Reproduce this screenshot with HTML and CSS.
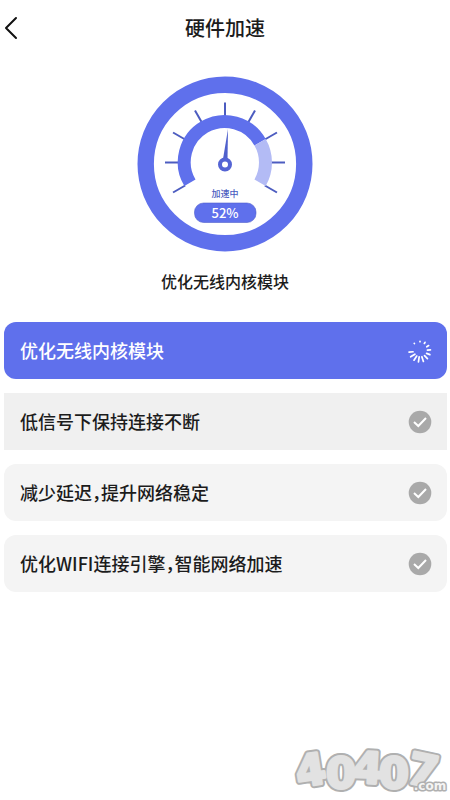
FILE: index.html
```html
<!DOCTYPE html>
<html lang="zh-CN">
<head>
<meta charset="utf-8">
<meta name="viewport" content="width=device-width, initial-scale=1">
<title>硬件加速</title>
<link rel="stylesheet" href="styles.css">
</head>
<body>
<header class="topbar">
  <button class="back" type="button" aria-label="返回">
    <svg width="16" height="24" viewBox="0 0 16 24"><path d="M12 2 2 12 12 22" fill="none" stroke="currentColor" stroke-width="2" stroke-linecap="round" stroke-linejoin="round"/></svg>
  </button>
  <h1 class="title">硬件加速</h1>
</header>
<main class="content">
  <section class="status">
    <svg class="gauge" width="176" height="176" viewBox="0 0 176 176">
      <circle cx="88" cy="88" r="79.3" fill="none" stroke="#5f70ec" stroke-width="16.4"/>
      <g transform="translate(88 86.5)">
        <g stroke="#4c5cc0" stroke-width="2">
          <path id="tick" d="M46 0H60"/>
          <use href="#tick" transform="rotate(30)"/>
          <use href="#tick" transform="rotate(-30)"/>
          <use href="#tick" transform="rotate(-60)"/>
          <use href="#tick" transform="rotate(-90)"/>
          <use href="#tick" transform="rotate(-120)"/>
          <use href="#tick" transform="rotate(-150)"/>
          <use href="#tick" transform="rotate(180)"/>
          <use href="#tick" transform="rotate(150)"/>
        </g>
        <path d="M-35.07 20.25A40.5 40.5 0 1 1 35.07-20.25" fill="none" stroke="#5f70ec" stroke-width="13"/>
        <path d="M35.07-20.25A40.5 40.5 0 0 1 35.07 20.25" fill="none" stroke="#b3bbf5" stroke-width="13"/>
      </g>
      <path d="M91 53 86 83H90.5Z" fill="#4f60cc"/>
      <circle cx="88" cy="88.5" r="5" fill="#fff" stroke="#5464d4" stroke-width="4"/>
      <text class="gauge-label" x="88" y="121">加速中</text>
      <rect x="57.5" y="127" width="61.5" height="19.5" rx="9" fill="#5f70ec" stroke="#5060cc" stroke-width=".6"/>
      <text class="gauge-value" x="88" y="141.5">52%</text>
    </svg>
    <p class="caption">优化无线内核模块</p>
  </section>
  <ul class="tasks">
    <li class="task task-active">
      <span>优化无线内核模块</span>
      <svg class="state" width="24" height="24" viewBox="-12 -12 24 24" stroke="#fff" stroke-width="1.7" stroke-linecap="round">
        <path d="M0-9.3V-9.7"/><path d="M0-8.7V-10" transform="rotate(30)"/><path d="M0-8V-10.2" transform="rotate(58)"/>
        <path d="M0-7.5V-10.5" transform="rotate(84)"/><path d="M0-7V-10.5" transform="rotate(110)"/><path d="M0-6.5V-10.7" transform="rotate(136)"/>
        <path d="M0-6V-11" transform="rotate(162)"/><path d="M0-6V-11" transform="rotate(188)"/><path d="M0-6V-11" transform="rotate(213)"/>
        <path d="M0-6V-11" transform="rotate(238)"/><path d="M0-7V-11" transform="rotate(264)"/><path d="M0-9.3V-9.6" transform="rotate(323)"/>
      </svg>
    </li>
    <li class="task task-pressed">
      <span>低信号下保持连接不断</span>
      <svg class="state" width="24" height="24" viewBox="0 0 24 24"><circle cx="12" cy="12" r="11.3" fill="#a9a9a9"/><path d="M6 12 10.3 16 18 8" fill="none" stroke="#fff" stroke-width="2"/></svg>
    </li>
    <li class="task">
      <span>减少延迟，提升网络稳定</span>
      <svg class="state" width="24" height="24" viewBox="0 0 24 24"><circle cx="12" cy="12" r="11.3" fill="#a9a9a9"/><path d="M6 12 10.3 16 18 8" fill="none" stroke="#fff" stroke-width="2"/></svg>
    </li>
    <li class="task">
      <span>优化WIFI连接引擎，智能网络加速</span>
      <svg class="state" width="24" height="24" viewBox="0 0 24 24"><circle cx="12" cy="12" r="11.3" fill="#a9a9a9"/><path d="M6 12 10.3 16 18 8" fill="none" stroke="#fff" stroke-width="2"/></svg>
    </li>
  </ul>
</main>
<footer class="footer">
  <svg class="brand" width="160" height="60" viewBox="0 0 160 60">
    <g class="brand-digits">
      <g class="brand-edge">
        <g id="digits">
          <text transform="translate(23 45) rotate(-9)">4</text>
          <text transform="translate(77 43) rotate(3)">4</text>
          <text transform="translate(51 48)">0</text>
          <text transform="translate(104 48)">0</text>
          <text transform="translate(130 45) rotate(12)">7</text>
        </g>
      </g>
      <use class="brand-face" href="#digits"/>
    </g>
    <text class="brand-suffix" x="140" y="50">.com</text>
  </svg>
</footer>
</body>
</html>
```
FILE: styles.css
```css
* {
  box-sizing: border-box;
}

body {
  margin: 0;
  min-height: 100vh;
  display: flex;
  flex-direction: column;
  background: #fff;
  color: #1c1c1c;
  font-family: "Noto Sans CJK SC", sans-serif;
  font-weight: 500;
}

.topbar {
  display: grid;
  grid-template-columns: 40px 1fr 40px;
  align-items: center;
  height: 56px;
}

.back {
  display: flex;
  padding: 0 4px;
  border: 0;
  background: none;
  color: #111;
}

.title {
  margin: 0;
  font-size: 20px;
  font-weight: 500;
  line-height: 28px;
  text-align: center;
}

.content {
  flex: 1;
}

.status {
  display: flex;
  flex-direction: column;
  align-items: center;
  gap: 16px;
  padding: 20px 0 28px;
}

.gauge {
  display: block;
}

.gauge-label,
.gauge-value {
  text-anchor: middle;
}

.gauge-label {
  fill: #4c5cc0;
  font-size: 9px;
}

.gauge-value {
  fill: #fff;
  font-size: 13px;
}

.caption {
  margin: 0;
  font-size: 16px;
  line-height: 26px;
}

.tasks {
  display: flex;
  flex-direction: column;
  gap: 14px;
  margin: 0;
  padding: 0 3px 0 4px;
  list-style: none;
}

.task {
  display: flex;
  align-items: center;
  justify-content: space-between;
  padding: 15px 15px 15px 16px;
  border-radius: 12px;
  background: #f4f4f4;
  font-size: 18px;
  line-height: 27px;
  font-feature-settings: "halt";
}

.task-active {
  background: #5f70ec;
  color: #fff;
}

.task-pressed {
  border-radius: 0;
  background: #f0f0f0;
}

.state {
  flex: none;
}

.footer {
  display: flex;
  justify-content: flex-end;
}

.brand {
  display: block;
}

.brand text {
  stroke-linejoin: round;
  paint-order: stroke;
  text-anchor: middle;
  font-family: "DejaVu Sans", sans-serif;
  font-weight: 700;
}

.brand-digits {
  font-size: 43px;
}

.brand-edge {
  fill: #b0b0b0;
  stroke: #b0b0b0;
  stroke-width: 7px;
}

.brand-face {
  fill: #e2e2e2;
  stroke: #e2e2e2;
  stroke-width: 3px;
}

.brand-suffix {
  fill: #f4f4f4;
  stroke: #b0b0b0;
  font-size: 12px;
  stroke-width: 3px;
}
```
